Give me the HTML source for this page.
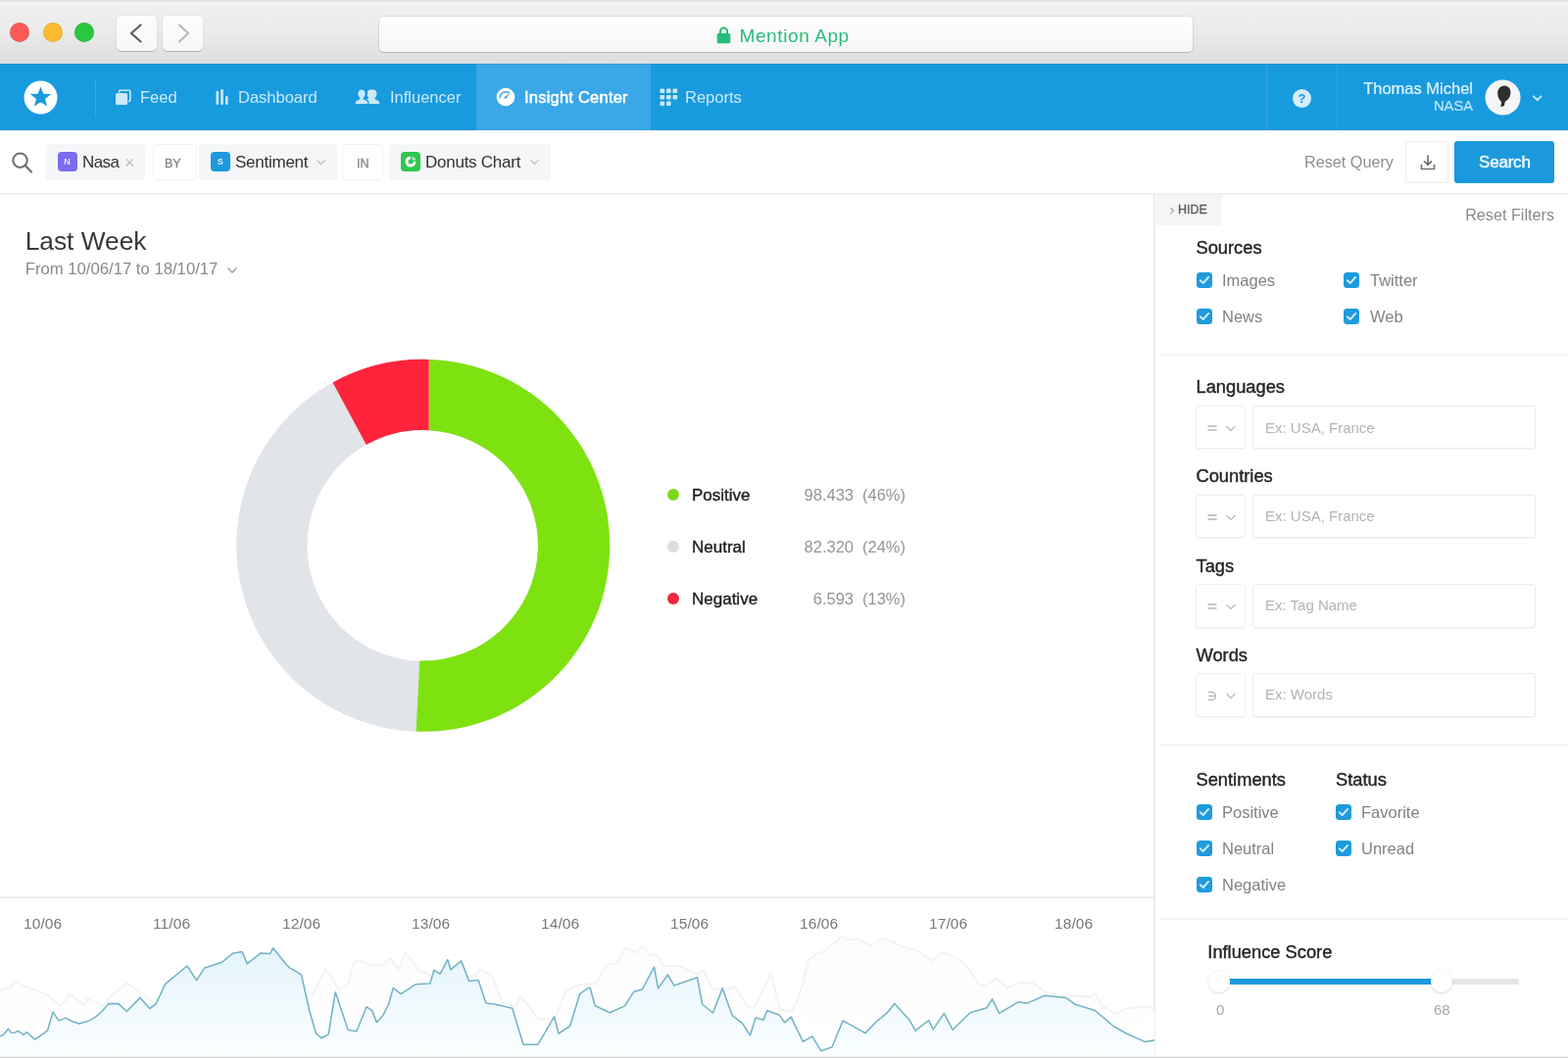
<!DOCTYPE html>
<html lang="en">
<head>
<meta charset="utf-8">
<title>Mention App</title>
<style>
*{box-sizing:border-box;margin:0;padding:0}
html,body{width:1600px;height:1080px;overflow:hidden;background:#fff}
body{font-family:"Liberation Sans",sans-serif;color:#222;position:relative;-webkit-font-smoothing:antialiased}
#wrap{position:absolute;left:0;top:0;width:1600px;height:1080px;will-change:transform}
.abs{position:absolute}
.t{position:absolute;white-space:nowrap;line-height:1}
/* browser chrome */
#chrome{left:0;top:0;width:1600px;height:65px;background:linear-gradient(#e2e2e2 0,#e6e6e6 1.5px,#f5f5f5 3px,#efefef 7px,#ebebeb 30px,#dededf 64px)}
.dot{position:absolute;top:23px;width:20px;height:20px;border-radius:50%}
.nb{position:absolute;top:16px;height:36px;width:41px;background:linear-gradient(#fdfdfd,#f7f7f7);border-radius:5px;box-shadow:0 1px 1px rgba(0,0,0,.2),0 0 0 .5px rgba(0,0,0,.06)}
#url{left:387px;top:17px;width:830px;height:36px;background:linear-gradient(#fefefe,#f6f6f6);border-radius:4.5px;box-shadow:0 1px 1px rgba(0,0,0,.13),0 0 0 1px rgba(0,0,0,.07)}
/* nav */
#nav{left:0;top:65px;width:1600px;height:68px;background:#189ade;box-shadow:inset 0 1px 0 #1c8ccb,inset 0 -1px 0 #1b92d3}
#nav .t{color:#cbe9f9;font-size:16.5px}
.vsep{position:absolute;width:1px;background:rgba(255,255,255,.12)}
/* query bar */
#qbar{left:0;top:133px;width:1600px;height:66px;background:#fff;border-bottom:2px solid #efefef}
.chip{position:absolute;top:147px;height:37px;background:#f5f6f7;border-radius:3px}
.chipw{position:absolute;top:147px;height:37px;background:#fff;border:1px solid #f3f3f3;border-radius:3px}
.badge{position:absolute;top:155px;width:20px;height:20px;border-radius:4px;color:#e9e6fd;font-size:9px;font-weight:bold;text-align:center;line-height:21px}
.ct{font-size:17px;color:#323232;top:156.5px;letter-spacing:-.25px}
/* sidebar */
.h{font-size:18.3px;color:#252525;font-weight:normal;-webkit-text-stroke:.4px #252525}
.lbl{font-size:16.5px;color:#828282}
.cb{position:absolute;width:16px;height:16px;border-radius:3.5px;background:#1f9bdd}
.cb svg{position:absolute;left:0;top:0}
.op{position:absolute;left:1220px;width:51px;height:44px;border:1px solid #eeeeee;border-radius:3px;background:#fff;box-shadow:0 1px 1px rgba(0,0,0,.04)}
.in{position:absolute;left:1278px;width:289px;height:44px;border:1px solid #ececec;border-radius:3px;background:#fff;box-shadow:0 1px 1px rgba(0,0,0,.04)}
.ph{font-size:15px;color:#b3b3b3}
.hsep{position:absolute;left:1184px;width:416px;height:2px;background:#f5f5f5}

.lg{font-size:17px;color:#1f1f1f;-webkit-text-stroke:.4px #1f1f1f;margin-top:.5px}
.lv{font-size:16.500px;color:#959595;margin-top:.5px}
.dl{top:935px;font-size:15.5px;letter-spacing:.1px;color:#787878}
.knob{width:22px;height:22px;border-radius:50%;background:#fff;box-shadow:0 1px 3px rgba(0,0,0,.14),0 0 0 .5px rgba(0,0,0,.04)}
</style>
</head>
<body>
<div id="wrap">
<div id="chrome" class="abs">
  <div class="dot" style="left:10px;background:#fc5b57;box-shadow:inset 0 0 0 1px rgba(0,0,0,.08)"></div>
  <div class="dot" style="left:44px;background:#fdbc2e;box-shadow:inset 0 0 0 1px rgba(0,0,0,.08)"></div>
  <div class="dot" style="left:76px;background:#28c840;box-shadow:inset 0 0 0 1px rgba(0,0,0,.08)"></div>
  <div class="nb" style="left:119px"><svg width="41" height="36" viewBox="0 0 41 36"><path d="M24.5 9.5 L15 18 L24.5 26.5" fill="none" stroke="#5e5e5e" stroke-width="2.2" stroke-linecap="round" stroke-linejoin="round"/></svg></div>
  <div class="nb" style="left:166px"><svg width="41" height="36" viewBox="0 0 41 36"><path d="M17 9.5 L26 18 L17 26.5" fill="none" stroke="#b9b9b9" stroke-width="2.2" stroke-linecap="round" stroke-linejoin="round"/></svg></div>
  <div id="url" class="abs"></div>
  <svg class="abs" style="left:730px;top:25px" width="17" height="21" viewBox="0 0 17 21"><path d="M5 9.500 V7 a3.500 3.500 0 0 1 7 0 V9.500" fill="none" stroke="#27bd78" stroke-width="2"/><rect x="1.700" y="9" width="13.600" height="10.300" rx="1.500" fill="#27bd78"/></svg>
  <div class="t" style="left:754.5px;top:27px;font-size:19px;color:#27bd78;letter-spacing:.6px">Mention App</div>
</div>

<div id="nav" class="abs">
  <svg class="abs" style="left:24px;top:17px" width="35" height="35" viewBox="0 0 35 35"><circle cx="17.5" cy="17.5" r="17" fill="#fff"/><path transform="translate(0 -.4)" d="M17.5 6.8 L20.3 14.2 L28.2 14.5 L22 19.4 L24.1 27 L17.5 22.7 L10.9 27 L13 19.4 L6.8 14.5 L14.7 14.2 Z" fill="#199ade"/></svg>
  <div class="vsep" style="left:97px;top:16px;height:38px"></div>
  <svg class="abs" style="left:117px;top:26px" width="17" height="17" viewBox="0 0 17 17"><path d="M4.5 3.5 V2.2 a1 1 0 0 1 1-1 H14.8 a1 1 0 0 1 1 1 V11.5 a1 1 0 0 1-1 1 H13.5" fill="none" stroke="#cbe9f9" stroke-width="1.6"/><rect x="1" y="4" width="12" height="12" rx="1.5" fill="#cbe9f9"/></svg>
  <div class="t" style="left:143px;top:26px">Feed</div>
  <svg class="abs" style="left:219px;top:24px" width="16" height="20" viewBox="0 0 16 20"><rect x="1.5" y="3.800" width="2.6" height="14.200" rx="1.3" fill="#cbe9f9"/><rect x="6.2" y="2" width="2.6" height="16" rx="1.3" fill="#cbe9f9"/><rect x="11" y="9" width="2.6" height="9" rx="1.3" fill="#cbe9f9"/></svg>
  <div class="t" style="left:243px;top:26px">Dashboard</div>
  <svg class="abs" style="left:362px;top:25px" width="26" height="18" viewBox="0 0 26 18"><g fill="#cbe9f9"><path d="M7 1.5c2.2 0 3.6 1.7 3.6 4 0 2-1 3.700-2 4.500v1.200l3.600 1.700c.7.3 1 .9 1 1.600v1.500H0.800v-1.500c0-.7.300-1.300 1-1.600l3.600-1.700v-1.200c-1-.8-2-2.500-2-4.500 0-2.300 1.400-4 3.600-4z"/><path d="M18.600 1.500c2.200 0 3.600 1.700 3.600 4 0 2-1 3.700-2 4.500v1.200l3.600 1.700c.7.3 1 .9 1 1.600v1.500H14.200v-1.600c0-1-.5-1.800-1.400-2.300l-1.300-.6 2.100-1v-1.200c-.6-.5-1-1.100-1.300-1.800.3-.9.500-1.900.5-2.900 0-.5 0-.9-.1-1.300.6-1.100 1.600-1.800 2.900-1.800z" transform="translate(.3 0)"/></g></svg>
  <div class="t" style="left:398px;top:26px">Influencer</div>
  <div class="abs" style="left:486px;top:0;width:178px;height:68px;background:#3aa7e8;box-shadow:inset 0 1px 0 #3597d3,inset 0 -1px 0 #379fdf"></div>
  <svg class="abs" style="left:506px;top:24px" width="20" height="20" viewBox="0 0 20 20"><circle cx="10" cy="10" r="9.3" fill="#fff"/><path d="M4.2 10.500a5.800 5.800 0 0 1 9.300-4.600" fill="none" stroke="#3aa7e8" stroke-width="1.500" stroke-linecap="round"/><path d="M14.200 6.200 L10.600 11.400 a1.300 1.300 0 0 1-2-1.500 Z" fill="#3aa7e8"/></svg>
  <div class="t" style="left:535px;top:26px;color:#fff;font-size:16.5px;letter-spacing:.22px;-webkit-text-stroke:.55px #fff">Insight Center</div>
  <svg class="abs" style="left:673px;top:25px" width="19" height="19" viewBox="0 0 19 19"><g fill="#cbe9f9"><rect x="0.500" y="0.500" width="4.600" height="4.600" rx="1"/><rect x="7" y="0.500" width="4.600" height="4.600" rx="1"/><rect x="13.500" y="0.500" width="4.600" height="4.600" rx="1"/><rect x="0.500" y="7" width="4.600" height="4.600" rx="1"/><rect x="7" y="7" width="4.600" height="4.600" rx="1"/><rect x="13.500" y="7" width="4.600" height="4.600" rx="1"/><rect x="0.500" y="13.500" width="4.600" height="4.600" rx="1"/><rect x="7" y="13.500" width="4.600" height="4.600" rx="1"/></g></svg>
  <div class="t" style="left:699px;top:26px">Reports</div>
  <div class="vsep" style="left:1292px;top:0;height:68px"></div>
  <div class="vsep" style="left:1364px;top:0;height:68px"></div>
  <div class="abs" style="left:1319px;top:26px;width:19px;height:19px;border-radius:50%;background:#d3edfa;color:#199ade;font-weight:bold;font-size:13px;line-height:19px;text-align:center">?</div>
  <div class="t" style="right:97px;top:16.800px;font-size:16.5px;color:#e0f3fc;-webkit-text-stroke:.2px #e0f3fc">Thomas Michel</div>
  <div class="t" style="right:97px;top:35.800px;font-size:14.7px;color:#c0e5f8;-webkit-text-stroke:.2px #c0e5f8">NASA</div>
  <svg class="abs" style="left:1515px;top:16px" width="37" height="37" viewBox="0 0 37 37"><circle cx="18.500" cy="18.500" r="18" fill="#f5f5f5"/><path d="M13.200 13.500c.3-4.300 3.400-7.300 7.300-7 4 .3 6.300 3.600 5.900 7.800-.3 3.300-1.900 6-4.300 7.500-.7.400-1.300.9-1.500 1.700l-.7 3.600-3.600 1.200.8-5.200c-2.500-1.900-4.100-5.600-3.900-9.600z" fill="#2e2e2e"/></svg>
  <svg class="abs" style="left:1562px;top:30.700px" width="13" height="9" viewBox="0 0 13 9"><path d="M2.800 2.300 L6.700 6 L10.600 2.300" fill="none" stroke="#cbe9f9" stroke-width="1.800" stroke-linecap="round" stroke-linejoin="round"/></svg>
</div>

<div id="qbar" class="abs"></div>
<svg class="abs" style="left:11px;top:154px" width="24" height="24" viewBox="0 0 24 24"><circle cx="9.500" cy="9.700" r="7.200" fill="none" stroke="#6f6f6f" stroke-width="2"/><path d="M15 15.200 L21 21.500" stroke="#6f6f6f" stroke-width="2.200" stroke-linecap="round"/></svg>
<div class="chip" style="left:47px;width:101px"></div>
<div class="badge" style="left:58.500px;background:#7b6cf0">N</div>
<div class="t ct" style="left:84px;letter-spacing:-.6px">Nasa</div>
<div class="t" style="left:127px;top:157px;font-size:18px;color:#c2c2c2">×</div>
<div class="chipw" style="left:155.500px;width:45px"></div>
<div class="t" style="left:168px;top:160.500px;font-size:12.500px;color:#858585;-webkit-text-stroke:.3px #858585">BY</div>
<div class="chip" style="left:203px;width:141px"></div>
<div class="badge" style="left:214.700px;background:#1d9ade">S</div>
<div class="t ct" style="left:240px">Sentiment</div>
<svg class="abs" style="left:322px;top:162px" width="11" height="8" viewBox="0 0 11 8"><path d="M1.500 1.500 L5.500 5.500 L9.500 1.500" fill="none" stroke="#c4c4c4" stroke-width="1.400"/></svg>
<div class="chipw" style="left:349px;width:42px"></div>
<div class="t" style="left:364px;top:160.500px;font-size:12.500px;color:#858585;-webkit-text-stroke:.3px #858585">IN</div>
<div class="chip" style="left:397px;width:165px"></div>
<div class="badge" style="left:408.500px;background:#2fc651"></div>
<svg class="abs" style="left:408.500px;top:155px" width="20" height="20" viewBox="0 0 20 20"><path d="M10 4.500 a5.500 5.500 0 1 0 5.500 5.500 h-3 a2.500 2.500 0 1 1-2.500-2.500 z" fill="#fff"/><path d="M11.300 4.500 a5.500 5.500 0 0 1 4.200 4.200 h-3 a2.500 2.500 0 0 0-1.200-1.200 z" fill="#fff" opacity=".6"/></svg>
<div class="t ct" style="left:434px">Donuts Chart</div>
<svg class="abs" style="left:540px;top:162px" width="11" height="8" viewBox="0 0 11 8"><path d="M1.500 1.500 L5.500 5.500 L9.500 1.500" fill="none" stroke="#c4c4c4" stroke-width="1.400"/></svg>
<div class="t" style="left:1331px;top:157px;font-size:16.2px;color:#8f8f8f">Reset Query</div>
<div class="abs" style="left:1434px;top:144px;width:44px;height:43px;border:1px solid #ececec;border-radius:3px;background:#fff"></div>
<svg class="abs" style="left:1447px;top:156px" width="20" height="20" viewBox="0 0 20 20"><path d="M10 3 V12 M6.500 8.800 L10 12.300 L13.500 8.800" fill="none" stroke="#727272" stroke-width="1.700" stroke-linecap="round" stroke-linejoin="round"/><path d="M3.500 12.500 V16.500 H16.500 V12.500" fill="none" stroke="#727272" stroke-width="1.700" stroke-linecap="round" stroke-linejoin="round"/></svg>
<div class="abs" style="left:1484px;top:144px;width:102px;height:43px;border-radius:3px;background:#1b99dd"></div>
<div class="t" style="left:1509px;top:156.500px;font-size:17px;color:#eef8fe;letter-spacing:-.2px;-webkit-text-stroke:.5px #eef8fe">Search</div>

<div class="t" style="left:25.700px;top:233px;font-size:26.300px;color:#3a3a3a">Last Week</div>
<div class="t" style="left:25.700px;top:266.500px;font-size:16.700px;color:#8a8a8a">From 10/06/17 to 18/10/17</div>
<svg class="abs" style="left:231px;top:272px" width="12" height="9" viewBox="0 0 12 9"><path d="M1.500 1.500 L6 6 L10.500 1.500" fill="none" stroke="#9a9a9a" stroke-width="1.400"/></svg>
<svg class="abs" style="left:231px;top:356px" width="402" height="402" viewBox="231 356 402 402">
  <path d="M241.25,556.8 A190.0,190.0 0 1 1 621.25,556.8 A190.0,190.0 0 1 1 241.25,556.8 Z M313.45,556.8 A117.8,117.8 0 1 0 549.05,556.8 A117.8,117.8 0 1 0 313.45,556.8 Z" fill="#e1e4e8" fill-rule="evenodd"/><path d="M437.60,366.91 A190.0,190.0 0 1 1 424.60,746.68 L428.30,674.56 A117.8,117.8 0 0 0 437.60,439.17 Z" fill="#7ee211"/><path d="M339.57,390.38 A190.0,190.0 0 0 1 437.60,366.91 L437.60,439.17 A117.8,117.8 0 0 0 373.78,453.97 Z" fill="#fd243c"/>
</svg>
<div class="abs" style="left:681px;top:499px;width:12px;height:12px;border-radius:50%;background:#7bd81c"></div>
<div class="abs" style="left:681px;top:552px;width:12px;height:12px;border-radius:50%;background:#dddddd"></div>
<div class="abs" style="left:681px;top:605px;width:12px;height:12px;border-radius:50%;background:#f0293f"></div>
<div class="t lg" style="left:706px;top:496px">Positive</div>
<div class="t lg" style="left:706px;top:549px">Neutral</div>
<div class="t lg" style="left:706px;top:602px">Negative</div>
<div class="t lv" style="right:729px;top:496px">98.433</div>
<div class="t lv" style="right:729px;top:549px">82.320</div>
<div class="t lv" style="right:729px;top:602px">6.593</div>
<div class="t lv" style="left:880px;top:496px">(46%)</div>
<div class="t lv" style="left:880px;top:549px">(24%)</div>
<div class="t lv" style="left:880px;top:602px">(13%)</div>

<div class="abs" style="left:1177px;top:198px;width:2px;height:882px;background:#ededed"></div>
<div class="abs" style="left:1180px;top:199px;width:67px;height:30.5px;background:#f4f5f5;border-radius:0 0 3px 0"></div>
<svg class="abs" style="left:1192.500px;top:209.500px" width="7" height="10" viewBox="0 0 7 10"><path d="M1.500 2 L4.500 5 L1.500 8" fill="none" stroke="#a5a5a5" stroke-width="1.100"/></svg>
<div class="t" style="left:1202px;top:208px;font-size:12.500px;color:#5a5a5a;-webkit-text-stroke:.3px #5a5a5a">HIDE</div>
<div class="t" style="right:14px;top:211px;font-size:16.2px;color:#8a8a8a">Reset Filters</div>

<div class="t h" style="left:1220.5px;top:244px">Sources</div>
<div class="cb" style="left:1221px;top:278px"><svg width="16" height="16" viewBox="0 0 16 16"><path d="M3.800 8.300 L6.700 11 L12.200 4.900" fill="none" stroke="#d4edfb" stroke-width="1.900" stroke-linecap="round" stroke-linejoin="round"/></svg></div><div class="t lbl" style="left:1247px;top:278px">Images</div>
<div class="cb" style="left:1371px;top:278px"><svg width="16" height="16" viewBox="0 0 16 16"><path d="M3.800 8.300 L6.700 11 L12.200 4.900" fill="none" stroke="#d4edfb" stroke-width="1.900" stroke-linecap="round" stroke-linejoin="round"/></svg></div><div class="t lbl" style="left:1398px;top:278px">Twitter</div>
<div class="cb" style="left:1221px;top:315px"><svg width="16" height="16" viewBox="0 0 16 16"><path d="M3.800 8.300 L6.700 11 L12.200 4.900" fill="none" stroke="#d4edfb" stroke-width="1.900" stroke-linecap="round" stroke-linejoin="round"/></svg></div><div class="t lbl" style="left:1247px;top:315px">News</div>
<div class="cb" style="left:1371px;top:315px"><svg width="16" height="16" viewBox="0 0 16 16"><path d="M3.800 8.300 L6.700 11 L12.200 4.900" fill="none" stroke="#d4edfb" stroke-width="1.900" stroke-linecap="round" stroke-linejoin="round"/></svg></div><div class="t lbl" style="left:1398px;top:315px">Web</div>
<div class="hsep" style="top:361px"></div>

<div class="t h" style="left:1220.5px;top:386px">Languages</div>
<div class="op" style="top:413.5px;height:44px"><svg width="49" height="44" viewBox="0 0 49 44" style="position:absolute;left:0;top:0"><path d="M11.500 20 H20.500 M11.500 24 H20.500" stroke="#b5b5b5" stroke-width="1.300"/><path d="M30.500 20 L35 24.500 L39.500 20" fill="none" stroke="#bdbdbd" stroke-width="1.300"/></svg></div><div class="in" style="top:413.5px;height:44px"></div>
<div class="t ph" style="left:1291px;top:429px">Ex: USA, France</div>
<div class="t h" style="left:1220.5px;top:477px">Countries</div>
<div class="op" style="top:504.5px;height:44px"><svg width="49" height="44" viewBox="0 0 49 44" style="position:absolute;left:0;top:0"><path d="M11.500 20 H20.500 M11.500 24 H20.500" stroke="#b5b5b5" stroke-width="1.300"/><path d="M30.500 20 L35 24.500 L39.500 20" fill="none" stroke="#bdbdbd" stroke-width="1.300"/></svg></div><div class="in" style="top:504.5px;height:44px"></div>
<div class="t ph" style="left:1291px;top:519px">Ex: USA, France</div>
<div class="t h" style="left:1220.5px;top:569px">Tags</div>
<div class="op" style="top:595.5px;height:45px"><svg width="49" height="44" viewBox="0 0 49 44" style="position:absolute;left:0;top:0"><path d="M11.500 20 H20.500 M11.500 24 H20.500" stroke="#b5b5b5" stroke-width="1.300"/><path d="M30.500 20 L35 24.500 L39.500 20" fill="none" stroke="#bdbdbd" stroke-width="1.300"/></svg></div><div class="in" style="top:595.5px;height:45px"></div>
<div class="t ph" style="left:1291px;top:610px">Ex: Tag Name</div>
<div class="t h" style="left:1220.5px;top:660px">Words</div>
<div class="op" style="top:687.3px;height:45px"><svg width="49" height="44" viewBox="0 0 49 44" style="position:absolute;left:0;top:0"><path d="M12 18.500 H15.500 a4 4 0 0 1 0 8 H12 M12.500 22.500 H19" fill="none" stroke="#b5b5b5" stroke-width="1.300"/><path d="M30.500 20 L35 24.500 L39.500 20" fill="none" stroke="#bdbdbd" stroke-width="1.300"/></svg></div><div class="in" style="top:687.3px;height:45px"></div>
<div class="t ph" style="left:1291px;top:701.3px">Ex: Words</div>
<div class="hsep" style="top:760px"></div>

<div class="t h" style="left:1220.5px;top:787px">Sentiments</div>
<div class="t h" style="left:1363px;top:787px">Status</div>
<div class="cb" style="left:1221px;top:821px"><svg width="16" height="16" viewBox="0 0 16 16"><path d="M3.800 8.300 L6.700 11 L12.200 4.900" fill="none" stroke="#d4edfb" stroke-width="1.900" stroke-linecap="round" stroke-linejoin="round"/></svg></div><div class="t lbl" style="left:1247px;top:821px">Positive</div>
<div class="cb" style="left:1363px;top:821px"><svg width="16" height="16" viewBox="0 0 16 16"><path d="M3.800 8.300 L6.700 11 L12.200 4.900" fill="none" stroke="#d4edfb" stroke-width="1.900" stroke-linecap="round" stroke-linejoin="round"/></svg></div><div class="t lbl" style="left:1389px;top:821px">Favorite</div>
<div class="cb" style="left:1221px;top:858px"><svg width="16" height="16" viewBox="0 0 16 16"><path d="M3.800 8.300 L6.700 11 L12.200 4.900" fill="none" stroke="#d4edfb" stroke-width="1.900" stroke-linecap="round" stroke-linejoin="round"/></svg></div><div class="t lbl" style="left:1247px;top:858px">Neutral</div>
<div class="cb" style="left:1363px;top:858px"><svg width="16" height="16" viewBox="0 0 16 16"><path d="M3.800 8.300 L6.700 11 L12.200 4.900" fill="none" stroke="#d4edfb" stroke-width="1.900" stroke-linecap="round" stroke-linejoin="round"/></svg></div><div class="t lbl" style="left:1389px;top:858px">Unread</div>
<div class="cb" style="left:1221px;top:895px"><svg width="16" height="16" viewBox="0 0 16 16"><path d="M3.800 8.300 L6.700 11 L12.200 4.900" fill="none" stroke="#d4edfb" stroke-width="1.900" stroke-linecap="round" stroke-linejoin="round"/></svg></div><div class="t lbl" style="left:1247px;top:895px">Negative</div>
<div class="hsep" style="top:937px"></div>

<div class="t h" style="left:1232.300px;top:963px">Influence Score</div>
<div class="abs" style="left:1234px;top:999px;width:316px;height:6px;border-radius:3px;background:#e6e6e6"></div>
<div class="abs" style="left:1252px;top:999px;width:210px;height:6px;background:#1d9ade"></div>
<div class="abs knob" style="left:1233px;top:991px"></div>
<div class="abs knob" style="left:1460px;top:991px"></div>
<div class="t" style="left:1241px;top:1023px;font-size:15px;color:#a8a8a8">0</div>
<div class="t" style="left:1463px;top:1023px;font-size:15px;color:#a8a8a8">68</div>

<div class="abs" style="left:0;top:915px;width:1178px;height:2px;background:#ececec"></div>
<div class="t dl" style="left:24px">10/06</div>
<div class="t dl" style="left:156px">11/06</div>
<div class="t dl" style="left:288px">12/06</div>
<div class="t dl" style="left:420px">13/06</div>
<div class="t dl" style="left:552px">14/06</div>
<div class="t dl" style="left:684px">15/06</div>
<div class="t dl" style="left:816px">16/06</div>
<div class="t dl" style="left:948px">17/06</div>
<div class="t dl" style="left:1076px">18/06</div>
<svg class="abs" style="left:0;top:917px" width="1178" height="163" viewBox="0 917 1178 163">
  <defs>
    <linearGradient id="ag" x1="0" y1="960" x2="0" y2="1080" gradientUnits="userSpaceOnUse">
      <stop offset="0" stop-color="#e3f3fb"/><stop offset="1" stop-color="#fbfeff"/>
    </linearGradient>
    <linearGradient id="gg" x1="0" y1="950" x2="0" y2="1080" gradientUnits="userSpaceOnUse">
      <stop offset="0" stop-color="#fcfcfc"/><stop offset="1" stop-color="#ffffff"/>
    </linearGradient>
  </defs>
  <path d="M0.0,1010.9 L11.2,1007.2 L15.9,1000.6 L20.6,1005.3 L37.5,1010.9 L46.9,1014.7 L61.9,1026.9 L71.2,1014.7 L86.2,1025.9 L89.1,1019.4 L105.0,1026.9 L112.5,1017.5 L129.4,1003.4 L144.4,1013.8 L157.5,1024.1 L168.8,1011.9 L190.9,998.8 L200.6,1006.2 L243.8,991.2 L281.2,987.5 L300.0,996.9 L308.4,1004.4 L318.8,1016.6 L331.9,989.4 L338.4,996.9 L345.0,1010.0 L354.4,1006.2 L361.9,980.9 L365.6,980.0 L378.8,984.7 L390.0,984.7 L398.4,978.1 L406.9,989.4 L413.4,971.6 L427.5,990.3 L438.8,995.0 L450.0,998.8 L468.8,996.9 L485.6,995.9 L489.4,989.4 L502.5,995.9 L511.9,1023.1 L525.9,1026.9 L531.0,1016.6 L549.4,1040.0 L566.2,1040.0 L577.5,1011.9 L586.9,1006.2 L600.0,1004.4 L607.5,1004.4 L618.8,984.7 L630.0,982.8 L638.4,966.9 L649.7,972.5 L655.3,965.0 L663.8,975.3 L670.3,974.4 L676.9,985.6 L693.8,986.6 L712.5,995.0 L718.1,990.3 L727.5,1010.0 L744.4,1009.1 L750.0,1007.2 L763.1,1027.8 L770.6,1026.9 L786.6,994.1 L795.9,1030.6 L808.1,1032.5 L816.6,1013.8 L825.0,980.0 L831.6,974.4 L841.9,970.6 L859.7,955.6 L866.2,959.4 L875.6,958.4 L888.8,965.0 L900.0,957.5 L911.2,961.2 L918.8,965.9 L937.5,970.6 L950.6,980.9 L960.9,971.6 L975.0,977.2 L986.2,985.6 L999.4,1005.3 L1005.0,1006.2 L1016.2,998.8 L1027.5,1008.1 L1044.4,1002.5 L1053.8,1003.4 L1066.9,1012.8 L1087.5,1017.5 L1098.8,1016.6 L1111.9,1017.5 L1117.5,1013.8 L1125.0,1026.9 L1140.0,1035.3 L1147.5,1029.7 L1170.0,1027.2 L1178.4,1030.6 L1178,1031 L1178,1080 L0,1080 Z" fill="url(#gg)"/>
  <path d="M0.0,1010.9 L11.2,1007.2 L15.9,1000.6 L20.6,1005.3 L37.5,1010.9 L46.9,1014.7 L61.9,1026.9 L71.2,1014.7 L86.2,1025.9 L89.1,1019.4 L105.0,1026.9 L112.5,1017.5 L129.4,1003.4 L144.4,1013.8 L157.5,1024.1 L168.8,1011.9 L190.9,998.8 L200.6,1006.2 L243.8,991.2 L281.2,987.5 L300.0,996.9 L308.4,1004.4 L318.8,1016.6 L331.9,989.4 L338.4,996.9 L345.0,1010.0 L354.4,1006.2 L361.9,980.9 L365.6,980.0 L378.8,984.7 L390.0,984.7 L398.4,978.1 L406.9,989.4 L413.4,971.6 L427.5,990.3 L438.8,995.0 L450.0,998.8 L468.8,996.9 L485.6,995.9 L489.4,989.4 L502.5,995.9 L511.9,1023.1 L525.9,1026.9 L531.0,1016.6 L549.4,1040.0 L566.2,1040.0 L577.5,1011.9 L586.9,1006.2 L600.0,1004.4 L607.5,1004.4 L618.8,984.7 L630.0,982.8 L638.4,966.9 L649.7,972.5 L655.3,965.0 L663.8,975.3 L670.3,974.4 L676.9,985.6 L693.8,986.6 L712.5,995.0 L718.1,990.3 L727.5,1010.0 L744.4,1009.1 L750.0,1007.2 L763.1,1027.8 L770.6,1026.9 L786.6,994.1 L795.9,1030.6 L808.1,1032.5 L816.6,1013.8 L825.0,980.0 L831.6,974.4 L841.9,970.6 L859.7,955.6 L866.2,959.4 L875.6,958.4 L888.8,965.0 L900.0,957.5 L911.2,961.2 L918.8,965.9 L937.5,970.6 L950.6,980.9 L960.9,971.6 L975.0,977.2 L986.2,985.6 L999.4,1005.3 L1005.0,1006.2 L1016.2,998.8 L1027.5,1008.1 L1044.4,1002.5 L1053.8,1003.4 L1066.9,1012.8 L1087.5,1017.5 L1098.8,1016.6 L1111.9,1017.5 L1117.5,1013.8 L1125.0,1026.9 L1140.0,1035.3 L1147.5,1029.7 L1170.0,1027.2 L1178.4,1030.6 L1178,1031" fill="none" stroke="#f3f3f3" stroke-width="2" stroke-linejoin="round"/>
  <path d="M0.0,1057.8 L3.8,1055.9 L8.4,1050.3 L11.6,1054.2 L15.4,1054.1 L18.4,1052.2 L24.0,1056.5 L27.2,1053.7 L35.6,1061.2 L48.4,1052.2 L54.0,1033.1 L60.0,1041.9 L67.1,1039.1 L74.1,1042.8 L80.6,1045.1 L90.9,1041.9 L97.5,1038.1 L103.1,1033.4 L111.0,1024.6 L120.9,1024.6 L129.4,1032.5 L142.9,1018.4 L152.8,1029.5 L159.0,1025.0 L168.8,1004.4 L190.9,986.0 L200.6,1000.6 L208.7,988.1 L217.5,985.2 L226.9,981.9 L238.1,972.9 L247.1,971.6 L252.2,983.8 L265.9,972.9 L275.6,973.6 L278.6,967.8 L292.5,985.1 L296.2,988.4 L300.0,990.3 L307.5,995.0 L315.9,1032.5 L322.5,1055.0 L328.1,1059.7 L335.2,1055.9 L342.2,1012.8 L355.3,1051.6 L363.8,1052.8 L374.1,1027.8 L379.7,1031.6 L384.4,1043.8 L390.9,1036.2 L396.6,1025.0 L401.2,1008.5 L409.1,1014.7 L424.1,1004.8 L438.8,1004.0 L442.9,990.3 L449.1,994.1 L456.8,979.6 L459.9,989.8 L470.6,980.9 L478.7,1001.6 L488.1,1000.6 L495.9,1024.1 L504.4,1025.0 L522.8,1029.3 L534.0,1066.2 L549.0,1066.2 L565.5,1037.8 L570.0,1055.0 L581.6,1047.5 L591.6,1014.7 L600.0,1008.5 L602.2,1008.5 L607.1,1026.5 L622.1,1033.8 L637.5,1026.9 L646.9,1012.2 L655.3,1010.0 L667.5,987.1 L671.6,1008.9 L681.4,995.0 L687.8,1005.9 L711.6,997.8 L716.6,1025.0 L727.5,1034.0 L737.2,1008.9 L747.2,1036.6 L757.5,1044.7 L765.4,1056.9 L771.0,1039.1 L779.1,1040.9 L782.8,1031.6 L795.0,1035.9 L800.6,1043.8 L807.2,1038.1 L819.4,1063.4 L828.8,1057.8 L837.8,1072.8 L849.0,1068.7 L860.1,1041.9 L883.1,1054.6 L894.4,1042.8 L900.0,1038.1 L904.7,1034.4 L912.8,1024.4 L928.1,1041.3 L934.1,1052.2 L947.8,1041.5 L952.1,1050.9 L963.4,1034.4 L972.0,1051.2 L990.0,1033.8 L1006.9,1028.8 L1012.5,1019.8 L1019.6,1034.4 L1038.8,1022.8 L1048.1,1024.1 L1065.9,1016.2 L1087.5,1018.4 L1097.8,1025.6 L1117.5,1031.6 L1136.2,1047.5 L1149.4,1055.0 L1168.1,1063.4 L1178.4,1061.8 L1178,1061 L1178,1080 L0,1080 Z" fill="url(#ag)"/>
  <path d="M0.0,1057.8 L3.8,1055.9 L8.4,1050.3 L11.6,1054.2 L15.4,1054.1 L18.4,1052.2 L24.0,1056.5 L27.2,1053.7 L35.6,1061.2 L48.4,1052.2 L54.0,1033.1 L60.0,1041.9 L67.1,1039.1 L74.1,1042.8 L80.6,1045.1 L90.9,1041.9 L97.5,1038.1 L103.1,1033.4 L111.0,1024.6 L120.9,1024.6 L129.4,1032.5 L142.9,1018.4 L152.8,1029.5 L159.0,1025.0 L168.8,1004.4 L190.9,986.0 L200.6,1000.6 L208.7,988.1 L217.5,985.2 L226.9,981.9 L238.1,972.9 L247.1,971.6 L252.2,983.8 L265.9,972.9 L275.6,973.6 L278.6,967.8 L292.5,985.1 L296.2,988.4 L300.0,990.3 L307.5,995.0 L315.9,1032.5 L322.5,1055.0 L328.1,1059.7 L335.2,1055.9 L342.2,1012.8 L355.3,1051.6 L363.8,1052.8 L374.1,1027.8 L379.7,1031.6 L384.4,1043.8 L390.9,1036.2 L396.6,1025.0 L401.2,1008.5 L409.1,1014.7 L424.1,1004.8 L438.8,1004.0 L442.9,990.3 L449.1,994.1 L456.8,979.6 L459.9,989.8 L470.6,980.9 L478.7,1001.6 L488.1,1000.6 L495.9,1024.1 L504.4,1025.0 L522.8,1029.3 L534.0,1066.2 L549.0,1066.2 L565.5,1037.8 L570.0,1055.0 L581.6,1047.5 L591.6,1014.7 L600.0,1008.5 L602.2,1008.5 L607.1,1026.5 L622.1,1033.8 L637.5,1026.9 L646.9,1012.2 L655.3,1010.0 L667.5,987.1 L671.6,1008.9 L681.4,995.0 L687.8,1005.9 L711.6,997.8 L716.6,1025.0 L727.5,1034.0 L737.2,1008.9 L747.2,1036.6 L757.5,1044.7 L765.4,1056.9 L771.0,1039.1 L779.1,1040.9 L782.8,1031.6 L795.0,1035.9 L800.6,1043.8 L807.2,1038.1 L819.4,1063.4 L828.8,1057.8 L837.8,1072.8 L849.0,1068.7 L860.1,1041.9 L883.1,1054.6 L894.4,1042.8 L900.0,1038.1 L904.7,1034.4 L912.8,1024.4 L928.1,1041.3 L934.1,1052.2 L947.8,1041.5 L952.1,1050.9 L963.4,1034.4 L972.0,1051.2 L990.0,1033.8 L1006.9,1028.8 L1012.5,1019.8 L1019.6,1034.4 L1038.8,1022.8 L1048.1,1024.1 L1065.9,1016.2 L1087.5,1018.4 L1097.8,1025.6 L1117.5,1031.6 L1136.2,1047.5 L1149.4,1055.0 L1168.1,1063.4 L1178.4,1061.8 L1178,1061" fill="none" stroke="#74b3c5" stroke-width="1.550" stroke-linejoin="round"/>
</svg>
<div class="abs" style="left:0;top:1078px;width:1600px;height:1px;background:#efefef"></div><div class="abs" style="left:0;top:1079px;width:1600px;height:1px;background:#d3d3d3"></div>

</div>
</body>
</html>
